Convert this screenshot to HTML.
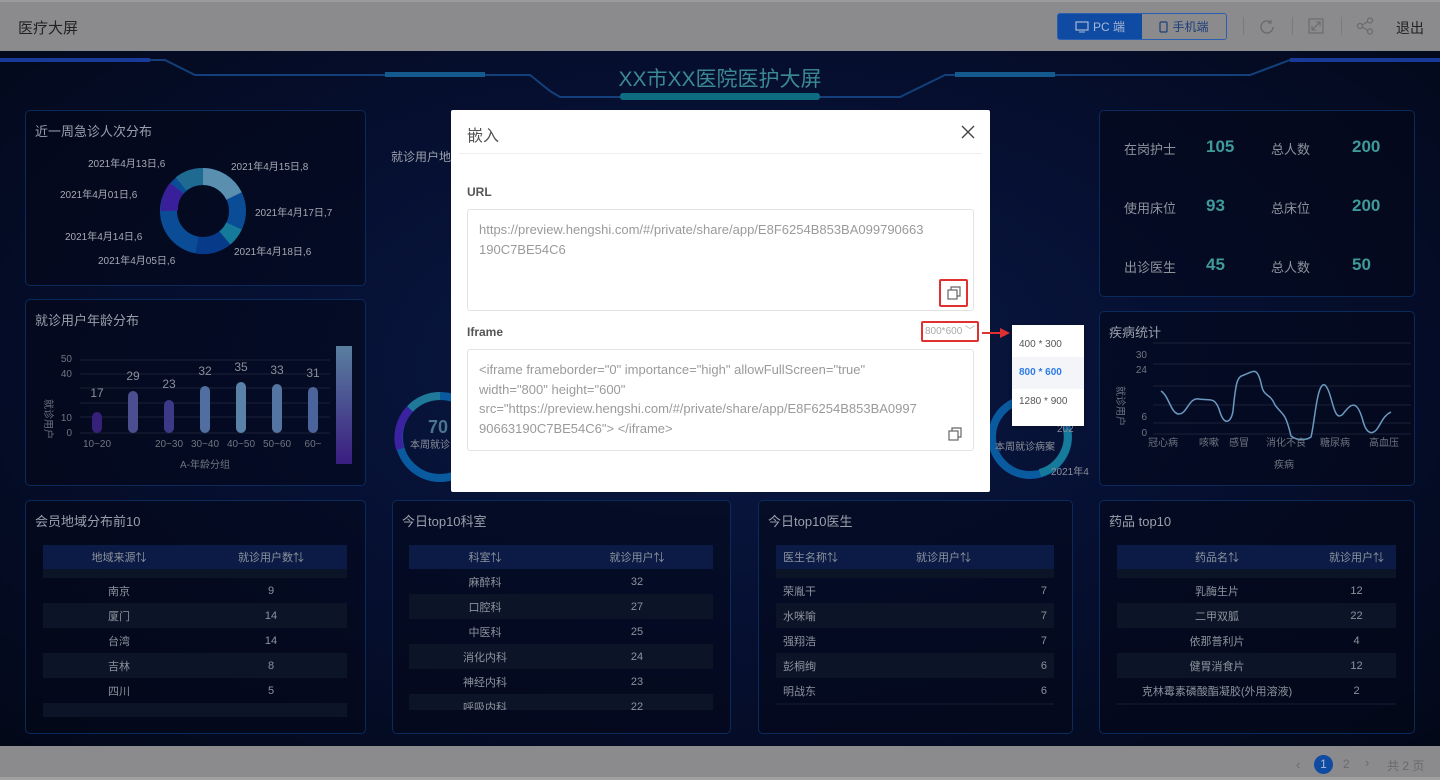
<!DOCTYPE html>
<html><head><meta charset="utf-8">
<style>
*{margin:0;padding:0;box-sizing:border-box}
body{width:1440px;height:780px;overflow:hidden;position:relative;background:#04091a;font-family:"Liberation Sans","Noto Sans CJK SC",sans-serif;}
.abs{position:absolute}
.top{left:0;top:0;width:1440px;height:51px;background:#8b8b8d;border-top:2px solid #9a9a9c}
.bot{left:0;top:746px;width:1440px;height:34px;background:#8b8b8d;border-bottom:3px solid #a0a0a0}
.dash{left:0;top:51px;width:1440px;height:695px;background:radial-gradient(ellipse at 50% 45%,#0a1a45 0%,#061033 45%,#030818 100%)}
.panel{position:absolute;border:1.5px solid #0b2a5c;border-radius:5px;background:rgba(3,8,24,.55)}
.pt{position:absolute;left:9px;top:10px;color:#9aa0ab;font-size:13px}
.tbl{position:absolute;font-size:11px;color:#8d939c}
.th{background:#0c1b46;height:24px;display:flex;align-items:center}
.tr{height:25px;display:flex;align-items:center}
.tr.s{background:#0c1428}
.c{flex:1;text-align:center}
.lbl{color:#8e949c;font-size:13px}
.num{color:#3f9a9a;font-size:17px;font-weight:bold}
.modal{left:451px;top:110px;width:539px;height:382px;background:#fff;border-radius:2px}
.box{position:absolute;left:16px;width:507px;height:102px;border:1px solid #e3e3e3;border-radius:3px;color:#9a9a9a;font-size:13px;line-height:19.5px;padding:10px 11px}
</style></head><body>
<div class="abs top"></div>
<div class="abs" style="left:18px;top:17px;font-size:15px;color:#222">医疗大屏</div>
<div class="abs" style="left:1057px;top:13px;width:170px;height:27px;border:1px solid #2a5eb0;border-radius:3px;overflow:hidden;display:flex;font-size:12px">
 <div style="width:84px;background:#0f4aa3;color:#a9b8d4;display:flex;align-items:center;justify-content:center;gap:4px"><svg width="14" height="12" viewBox="0 0 14 12"><rect x="1" y="1" width="12" height="8" fill="none" stroke="#a9b8d4" stroke-width="1.2"/><path d="M4 11h6" stroke="#a9b8d4"/></svg>PC 端</div>
 <div style="flex:1;background:#8b8b8d;color:#1d3e7c;display:flex;align-items:center;justify-content:center;gap:4px"><svg width="9" height="12" viewBox="0 0 9 12"><rect x="1" y="1" width="7" height="10" rx="1" fill="none" stroke="#1d3e7c" stroke-width="1.2"/></svg>手机端</div>
</div>
<div class="abs" style="left:1243px;top:17px;width:1px;height:18px;background:#7a7a7c"></div>
<div class="abs" style="left:1292px;top:17px;width:1px;height:18px;background:#7a7a7c"></div>
<div class="abs" style="left:1341px;top:17px;width:1px;height:18px;background:#7a7a7c"></div>
<svg class="abs" style="left:1258px;top:18px" width="18" height="18" viewBox="0 0 18 18"><path d="M15 9a6 6 0 1 1-2-4.5" fill="none" stroke="#6b6b6d" stroke-width="1.4"/><path d="M13 2v3h-3" fill="none" stroke="#6b6b6d" stroke-width="1.2"/></svg>
<svg class="abs" style="left:1308px;top:18px" width="16" height="16" viewBox="0 0 16 16"><rect x="1" y="1" width="14" height="14" fill="none" stroke="#6b6b6d" stroke-width="1.2"/><path d="M4 12L12 4M8 4h4v4M4 8v4h4" fill="none" stroke="#6b6b6d" stroke-width="1.1"/></svg>
<svg class="abs" style="left:1356px;top:17px" width="18" height="18" viewBox="0 0 18 18"><circle cx="4" cy="9" r="2.5" fill="none" stroke="#6b6b6d" stroke-width="1.2"/><circle cx="14" cy="3.5" r="2.5" fill="none" stroke="#6b6b6d" stroke-width="1.2"/><circle cx="14" cy="14.5" r="2.5" fill="none" stroke="#6b6b6d" stroke-width="1.2"/><path d="M6 8l6-3.5M6 10l6 3.5" stroke="#6b6b6d" stroke-width="1.2"/></svg>
<div class="abs" style="left:1396px;top:18px;font-size:14px;color:#222">退出</div>

<div class="abs dash"></div>
<svg class="abs" style="left:0;top:51px" width="1440" height="60">
<path d="M0 9H165L195 24H380L530 24L550 40L560 46H900L945 24H1060H1250L1290 9H1440" fill="none" stroke="#13407a" stroke-width="2"/>
<rect x="0" y="7" width="150" height="4" fill="#1a3a9a"/><rect x="1290" y="7" width="150" height="4" fill="#1a3a9a"/>
<rect x="385" y="21" width="100" height="5" fill="#155a8e"/><rect x="955" y="21" width="100" height="5" fill="#155a8e"/>
<rect x="620" y="42" width="200" height="7" rx="3" fill="#0e6c80"/>
<text x="720" y="35" fill="#3b8a92" font-size="21" text-anchor="middle" font-family="Liberation Sans,Noto Sans CJK SC,sans-serif">XX市XX医院医护大屏</text>
</svg>

<!-- P1 -->
<div class="panel" style="left:25px;top:110px;width:341px;height:176px"><div class="pt">近一周急诊人次分布</div></div>
<svg class="abs" style="left:25px;top:110px" width="341" height="176" font-size="10" fill="#a5aab2" font-family="Liberation Sans,Noto Sans CJK SC,sans-serif">
<g transform="translate(178,101)">
<circle r="34.5" fill="none" stroke="#0a4d96" stroke-width="17"/>
<path d="M0 -34.5A34.5 34.5 0 0 1 31 -15" fill="none" stroke="#5a8fb0" stroke-width="17"/>
<path d="M22 27A34.5 34.5 0 0 1 -6 34" fill="none" stroke="#083a8a" stroke-width="17"/>
<path d="M31 15A34.5 34.5 0 0 1 22 27" fill="none" stroke="#167a9a" stroke-width="17"/>
<path d="M-33 -6A34.5 34.5 0 0 1 -22 -27" fill="none" stroke="#3a1f9a" stroke-width="17" transform="rotate(-10)"/>
<path d="M-22 -27A34.5 34.5 0 0 1 0 -34.5" fill="none" stroke="#1e6a90" stroke-width="17"/>
</g>
<text x="63" y="57">2021年4月13日,6</text><text x="206" y="60">2021年4月15日,8</text>
<text x="35" y="88">2021年4月01日,6</text><text x="230" y="106">2021年4月17日,7</text>
<text x="40" y="130">2021年4月14日,6</text><text x="209" y="145">2021年4月18日,6</text>
<text x="73" y="154">2021年4月05日,6</text>
</svg>

<!-- P2 -->
<div class="panel" style="left:25px;top:299px;width:341px;height:187px"><div class="pt">就诊用户年龄分布</div></div>
<svg class="abs" style="left:25px;top:299px" width="341" height="187" font-size="10" fill="#6f7680" font-family="Liberation Sans,Noto Sans CJK SC,sans-serif">
<g stroke="#1a2238" stroke-width="1"><path d="M55 61H305M55 75H305M55 89H305M55 104H305M55 118H305M55 134H305"/></g>
<text x="47" y="63" text-anchor="end">50</text><text x="47" y="78" text-anchor="end">40</text><text x="47" y="122" text-anchor="end">10</text><text x="47" y="137" text-anchor="end">0</text>
<text x="20" y="100" transform="rotate(90 20 100)" font-size="10">就诊用户</text>
<g font-size="12" fill="#8a9098" text-anchor="middle">
<rect x="67" y="113" width="10" height="21" rx="5" fill="#35207a"/><text x="72" y="98">17</text>
<rect x="103" y="92" width="10" height="42" rx="5" fill="#4b4f90"/><text x="108" y="81">29</text>
<rect x="139" y="101" width="10" height="33" rx="5" fill="#3c3a88"/><text x="144" y="89">23</text>
<rect x="175" y="87" width="10" height="47" rx="5" fill="#506ea0"/><text x="180" y="76">32</text>
<rect x="211" y="83" width="10" height="51" rx="5" fill="#5a82a8"/><text x="216" y="72">35</text>
<rect x="247" y="85" width="10" height="49" rx="5" fill="#5474a2"/><text x="252" y="75">33</text>
<rect x="283" y="88" width="10" height="46" rx="5" fill="#4c649c"/><text x="288" y="78">31</text>
</g>
<g text-anchor="middle" fill="#6f7680"><text x="72" y="148">10~20</text><text x="144" y="148">20~30</text><text x="180" y="148">30~40</text><text x="216" y="148">40~50</text><text x="252" y="148">50~60</text><text x="288" y="148">60~</text><text x="180" y="169">A-年龄分组</text></g>
<defs><linearGradient id="cb" x1="0" y1="0" x2="0" y2="1"><stop offset="0" stop-color="#5a7fa0"/><stop offset="1" stop-color="#3a1d80"/></linearGradient></defs>
<rect x="311" y="47" width="16" height="118" fill="url(#cb)"/>
</svg>

<!-- middle -->
<div class="abs" style="left:391px;top:148px;font-size:12px;color:#9aa0ab">就诊用户地</div>
<svg class="abs" style="left:390px;top:385px" width="70" height="100"><g transform="translate(50,52)">
<circle r="41" fill="none" stroke="#0a5aa0" stroke-width="8"/>
<path d="M0 -41A41 41 0 0 0 -30 -28" fill="none" stroke="#1e7a98" stroke-width="8"/>
<path d="M-30 -28A41 41 0 0 0 -40 12" fill="none" stroke="#3b22a0" stroke-width="8"/>
</g><text x="38" y="48" font-size="18" font-weight="bold" fill="#4a7590" font-family="Liberation Sans">70</text>
<text x="20" y="63" font-size="10" fill="#8a909a" font-family="Noto Sans CJK SC,sans-serif">本周就诊</text></svg>
<svg class="abs" style="left:985px;top:380px" width="110" height="110" font-family="Liberation Sans,Noto Sans CJK SC,sans-serif"><g transform="translate(45,57)">
<circle r="38" fill="none" stroke="#0a5aa0" stroke-width="8"/>
<path d="M10 36A38 38 0 0 0 37 -8" fill="none" stroke="#167a9a" stroke-width="8"/>
</g><text x="10" y="70" font-size="10" fill="#8a909a">本周就诊病案</text><text x="72" y="52" font-size="10" fill="#8a909a">202</text><text x="66" y="95" font-size="10" fill="#8a909a">2021年4</text></svg>

<!-- right top -->
<div class="panel" style="left:1099px;top:110px;width:316px;height:187px"></div>
<div class="abs lbl" style="left:1124px;top:139px">在岗护士</div><div class="abs num" style="left:1206px;top:137px">105</div><div class="abs lbl" style="left:1271px;top:139px">总人数</div><div class="abs num" style="left:1352px;top:137px">200</div>
<div class="abs lbl" style="left:1124px;top:198px">使用床位</div><div class="abs num" style="left:1206px;top:196px">93</div><div class="abs lbl" style="left:1271px;top:198px">总床位</div><div class="abs num" style="left:1352px;top:196px">200</div>
<div class="abs lbl" style="left:1124px;top:257px">出诊医生</div><div class="abs num" style="left:1206px;top:255px">45</div><div class="abs lbl" style="left:1271px;top:257px">总人数</div><div class="abs num" style="left:1352px;top:255px">50</div>

<!-- right mid -->
<div class="panel" style="left:1099px;top:311px;width:316px;height:175px"><div class="pt">疾病统计</div></div>
<svg class="abs" style="left:1099px;top:311px" width="316" height="175" font-size="10" fill="#6f7680" font-family="Liberation Sans,Noto Sans CJK SC,sans-serif">
<g stroke="#1a2238"><path d="M54 32H312M54 53H312M54 75H312M54 94H312M54 112H312M54 123H312"/></g>
<text x="48" y="47" text-anchor="end">30</text><text x="48" y="62" text-anchor="end">24</text><text x="48" y="109" text-anchor="end">6</text><text x="48" y="125" text-anchor="end">0</text>
<text x="18" y="75" transform="rotate(90 18 75)">就诊用户</text>
<path d="M62 80C70 85 72 103 80 103C88 103 90 86 100 88C110 90 115 85 120 98C125 116 132 112 134 100C137 70 138 66 145 64C155 60 158 56 162 72C165 88 170 80 176 94C184 105 186 100 192 125C198 130 208 129 212 126C216 110 218 70 226 74C234 82 234 113 244 103C252 92 258 88 264 110C268 125 275 124 280 115C284 108 286 104 292 101" fill="none" stroke="#6a9ac0" stroke-width="1.5"/>
<g text-anchor="middle"><text x="64" y="135">冠心病</text><text x="110" y="135">咳嗽</text><text x="140" y="135">感冒</text><text x="187" y="135">消化不良</text><text x="236" y="135">糖尿病</text><text x="285" y="135">高血压</text><text x="185" y="157">疾病</text></g>
</svg>

<!-- bottom panels -->
<div class="panel" style="left:25px;top:500px;width:341px;height:234px"><div class="pt">会员地域分布前10</div>
<div class="tbl" style="left:17px;top:44px;width:304px;height:172px;overflow:hidden">
<div class="th"><div class="c">地域来源⇅</div><div class="c">就诊用户数⇅</div></div>
<div class="tr s" style="height:9px"></div>
<div class="tr"><div class="c">南京</div><div class="c">9</div></div>
<div class="tr s"><div class="c">厦门</div><div class="c">14</div></div>
<div class="tr"><div class="c">台湾</div><div class="c">14</div></div>
<div class="tr s"><div class="c">吉林</div><div class="c">8</div></div>
<div class="tr"><div class="c">四川</div><div class="c">5</div></div>
<div class="tr s"></div></div></div>

<div class="panel" style="left:392px;top:500px;width:339px;height:234px"><div class="pt">今日top10科室</div>
<div class="tbl" style="left:16px;top:44px;width:304px;height:165px;overflow:hidden">
<div class="th"><div class="c">科室⇅</div><div class="c">就诊用户⇅</div></div>
<div class="tr"><div class="c">麻醉科</div><div class="c">32</div></div>
<div class="tr s"><div class="c">口腔科</div><div class="c">27</div></div>
<div class="tr"><div class="c">中医科</div><div class="c">25</div></div>
<div class="tr s"><div class="c">消化内科</div><div class="c">24</div></div>
<div class="tr"><div class="c">神经内科</div><div class="c">23</div></div>
<div class="tr s"><div class="c">呼吸内科</div><div class="c">22</div></div></div></div>

<div class="panel" style="left:758px;top:500px;width:315px;height:234px"><div class="pt">今日top10医生</div>
<div class="tbl" style="left:17px;top:44px;width:278px;height:160px;overflow:hidden">
<div class="th"><div style="width:140px;padding-left:7px">医生名称⇅</div><div>就诊用户⇅</div></div>
<div class="tr s" style="height:9px"></div>
<div class="tr"><div style="flex:1;padding-left:7px">荣胤干</div><div style="padding-right:7px">7</div></div>
<div class="tr s"><div style="flex:1;padding-left:7px">水咪喻</div><div style="padding-right:7px">7</div></div>
<div class="tr"><div style="flex:1;padding-left:7px">强翔浩</div><div style="padding-right:7px">7</div></div>
<div class="tr s"><div style="flex:1;padding-left:7px">彭桐绚</div><div style="padding-right:7px">6</div></div>
<div class="tr"><div style="flex:1;padding-left:7px">明战东</div><div style="padding-right:7px">6</div></div>
<div class="tr s"></div></div></div>

<div class="panel" style="left:1099px;top:500px;width:316px;height:234px"><div class="pt">药品 top10</div>
<div class="tbl" style="left:17px;top:44px;width:279px;height:160px;overflow:hidden">
<div class="th"><div style="width:200px;text-align:center">药品名⇅</div><div class="c">就诊用户⇅</div></div>
<div class="tr s" style="height:9px"></div>
<div class="tr"><div style="width:200px;text-align:center">乳酶生片</div><div class="c">12</div></div>
<div class="tr s"><div style="width:200px;text-align:center">二甲双胍</div><div class="c">22</div></div>
<div class="tr"><div style="width:200px;text-align:center">依那普利片</div><div class="c">4</div></div>
<div class="tr s"><div style="width:200px;text-align:center">健胃消食片</div><div class="c">12</div></div>
<div class="tr"><div style="width:200px;text-align:center">克林霉素磷酸酯凝胶(外用溶液)</div><div class="c">2</div></div>
<div class="tr s"></div></div></div>

<div class="abs bot"></div>
<div class="abs" style="left:1296px;top:757px;font-size:13px;color:#6a6a6c">‹</div>
<div class="abs" style="left:1314px;top:755px;width:19px;height:19px;border-radius:50%;background:#0f4aa3;color:#a9b8d4;font-size:12px;text-align:center;line-height:19px">1</div>
<div class="abs" style="left:1343px;top:757px;font-size:12px;color:#6a6a6c">2</div>
<div class="abs" style="left:1365px;top:755px;font-size:13px;color:#6a6a6c">›</div>
<div class="abs" style="left:1387px;top:757px;font-size:12px;color:#6a6a6c">共 2 页</div>

<!-- modal -->
<div class="abs modal">
 <div class="abs" style="left:16px;top:12px;font-size:16px;color:#555">嵌入</div>
 <svg class="abs" style="left:510px;top:15px" width="14" height="14"><path d="M1 1L13 13M13 1L1 13" stroke="#444" stroke-width="1.4"/></svg>
 <div class="abs" style="left:8px;top:43px;width:523px;height:1px;background:#eee"></div>
 <div class="abs" style="left:16px;top:75px;font-size:12px;font-weight:bold;color:#555">URL</div>
 <div class="box" style="top:99px">https://preview.hengshi.com/#/private/share/app/E8F6254B853BA099790663<br>190C7BE54C6</div>
 <div class="abs" style="left:488px;top:169px;width:29px;height:28px;border:2px solid #e03030;border-radius:2px"></div>
 <svg class="abs" style="left:496px;top:176px" width="14" height="14"><rect x="1" y="4" width="9" height="9" fill="none" stroke="#666" stroke-width="1.2"/><path d="M4 4V1h9v9h-3" fill="none" stroke="#666" stroke-width="1.2"/></svg>
 <div class="abs" style="left:16px;top:215px;font-size:12px;font-weight:bold;color:#555">Iframe</div>
 <div class="abs" style="left:470px;top:211px;width:58px;height:21px;border:2px solid #e03030;border-radius:2px;font-size:10px;color:#aaa;line-height:17px;padding-left:2px">800*600 ﹀</div>
 <div class="box" style="top:239px">&lt;iframe frameborder="0" importance="high" allowFullScreen="true"<br>width="800" height="600"<br>src="https://preview.hengshi.com/#/private/share/app/E8F6254B853BA0997<br>90663190C7BE54C6"&gt; &lt;/iframe&gt;</div>
 <svg class="abs" style="left:497px;top:317px" width="14" height="14"><rect x="1" y="4" width="9" height="9" fill="none" stroke="#666" stroke-width="1.2"/><path d="M4 4V1h9v9h-3" fill="none" stroke="#666" stroke-width="1.2"/></svg>
</div>
<svg class="abs" style="left:980px;top:326px" width="32" height="14"><path d="M2 7H22" stroke="#e03030" stroke-width="2"/><path d="M20 2L30 7L20 12Z" fill="#e03030"/></svg>
<div class="abs" style="left:1012px;top:325px;width:72px;height:101px;background:#fff;box-shadow:0 1px 4px rgba(0,0,0,.3);font-size:10px;color:#555">
 <div style="height:32px;line-height:40px;padding-left:7px">400 * 300</div>
 <div style="height:32px;line-height:32px;padding-left:7px;background:#f3f5f8;color:#2d7be8;font-weight:bold">800 * 600</div>
 <div style="height:32px;line-height:26px;padding-left:7px">1280 * 900</div>
</div>
</body></html>
